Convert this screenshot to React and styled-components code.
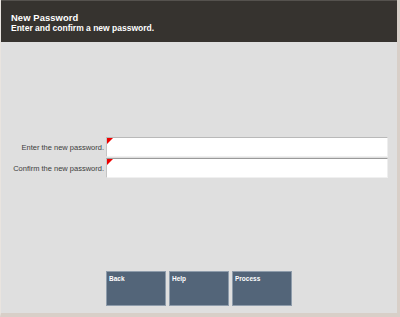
import React from "react";
import styled, { createGlobalStyle } from "styled-components";

const Global = createGlobalStyle`
  html, body { margin: 0; padding: 0; background: #dfdfdf; }
  body { font-family: "Liberation Sans", Arial, sans-serif; }
  * { box-sizing: border-box; }
`;

const Frame = styled.div`
  width: 400px;
  height: 317px;
  display: flex;
  flex-direction: column;
  background: #dfdfdf;
  border-left: 1px solid #e9e4df;
  border-right: 3px solid #d8cfc8;
  border-bottom: 4px solid #d8cfc8;
`;

const Header = styled.header`
  height: 42px;
  flex: none;
  background: #36332f;
  border-top: 1px solid #55524e;
  padding: 11px 0 0 10px;
  color: #fff;
  font-weight: bold;
`;

const Title = styled.div`
  font-size: 9.4px;
  line-height: 11px;
  letter-spacing: 0.1px;
`;

const Subtitle = styled.div`
  font-size: 8.5px;
  line-height: 11px;
`;

const Body = styled.main`
  flex: 1;
  display: flex;
  flex-direction: column;
`;

const Form = styled.div`
  margin-top: 95px;
  display: flex;
  flex-direction: column;
  gap: 1px;
`;

const Row = styled.div`
  display: grid;
  grid-template-columns: 105px 282px;
  align-items: center;
  height: 20px;
`;

const Label = styled.label`
  font-size: 7.5px;
  color: #3c3c3c;
  text-align: right;
  padding-right: 2px;
  white-space: nowrap;
`;

const Field = styled.div`
  position: relative;
  height: 20px;
  background: #fff;
  border-top: 1px solid ${(p) => (p.$dark ? "#9a9a9a" : "#b9b9b9")};
  border-left: 1px solid #c4c4c4;
  border-right: 1px solid #eeeeee;
  border-bottom: 1px solid #f0f0f0;
  &::before {
    content: "";
    position: absolute;
    left: 0;
    top: 0;
    width: 0;
    height: 0;
    border-top: 6px solid #ee0000;
    border-right: 6px solid transparent;
  }
`;

const ButtonBar = styled.div`
  margin-top: auto;
  margin-bottom: 7px;
  padding-left: 105px;
  display: flex;
  gap: 3px;
`;

const Button = styled.button`
  width: 60px;
  height: 35px;
  background: #536579;
  border: 1px solid #8e9cab;
  color: #fff;
  font-family: "Liberation Sans", Arial, sans-serif;
  font-weight: bold;
  font-size: 6.5px;
  text-align: left;
  padding: 3px 2px;
  display: flex;
  align-items: flex-start;
`;

export default function App() {
  return (
    <>
      <Global />
      <Frame>
        <Header>
          <Title>New Password</Title>
          <Subtitle>Enter and confirm a new password.</Subtitle>
        </Header>
        <Body>
          <Form>
            <Row>
              <Label>Enter the new password.</Label>
              <Field />
            </Row>
            <Row>
              <Label>Confirm the new password.</Label>
              <Field $dark />
            </Row>
          </Form>
          <ButtonBar>
            <Button>Back</Button>
            <Button>Help</Button>
            <Button>Process</Button>
          </ButtonBar>
        </Body>
      </Frame>
    </>
  );
}
